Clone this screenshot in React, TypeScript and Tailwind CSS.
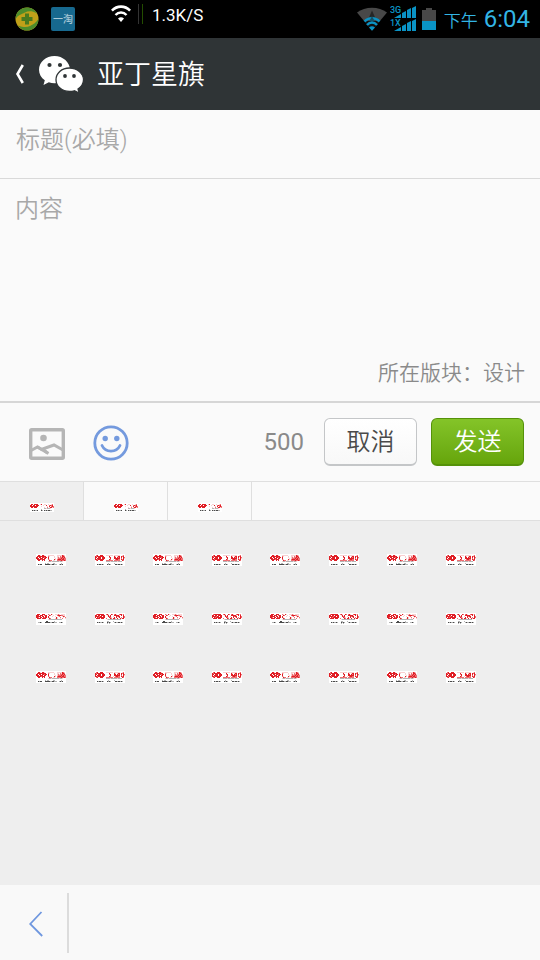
import React from "react";

const PALETTE: Record<string, string> = {
  R: "#e01f26",
  P: "#ee6e72",
  L: "#f8cfd0",
  K: "#4a4a4a",
  G: "#b4b4b4",
};

const STICKERS: string[][] = [
  [
    "..............................",
    "..RRL.RRL...LLLLLL...LLLLLRPL.",
    ".RRRRRRRRR..PL....L..LL.PLRRP.",
    "RR.RR.RRPRR.R.....L..LPLPPRPRL",
    "RRR.RRR.RR..R......L.LPPPRPRPP",
    ".RRRRPRRR...PL....RL.PRRRPRRPP",
    "..RR..R.R....RPP.LL..PPPPRPPRP",
    "............LGGLGGGGGGGLGGL...",
    "..............................",
    ".........G.GG....GG......G....",
    "..KGKK...KKKKKGGKKGGG..GKGK...",
    "..............................",
  ],
  [
    "..............................",
    ".PR..RRR...LLLLLLL.LLLLLL..LP.",
    "RPRRRRRRR.....R....RL.LRR.RPR.",
    "RR.RRR.RRR....PR...RR.RPR.R.RP",
    "R.RRRR.RRR.....R...RRRRRR.P.RL",
    "RRPRRRRRR.....RP..L.PRRPP.RPR.",
    ".PR..RRR...PPPPPPP.PPPPPP..RP.",
    "...........GGGGLGGGGGGLGGGG...",
    "..............................",
    ".............G.....G..........",
    "..KGKKGKG...KGKG....KKGKKGKG..",
    "..............................",
  ],
  [
    "..............................",
    ".RRR..RRR...PL.RL..LLLPL.LLLL.",
    "RRR.RRR.PRR..RP..L...PRRRPPLL.",
    "RRRRR.RR.RR.R...L..L..LP..LRP.",
    "RRP.RR.RPRR.RL......RL..P..L.P",
    ".RRRR.RRRR...RP....LRL..L.P..L",
    "............LGGGGGGGGGGGGG....",
    "..............................",
    "..........KK......G...........",
    "..GGKG...KKKKKGGKKGGG..GGKG...",
    "..............................",
    "..............................",
  ],
  [
    "..............................",
    ".PRRRRRRR..PRL..RP.PRL..PRRLP.",
    "RR.RR.RRRR..LR.R...RRRRRL.R.R.",
    "RRRRPRR.RR...RPR..L..RPRR...RP",
    "R.RPRRRRRR....RPL..R.R.LR.P.RP",
    ".RRRR.RRR..P...RP.RRL.R..RLRR.",
    "............LGGGGGGGGGGGGG....",
    "..............................",
    "............GG....G...........",
    "..KGKGGKG...KGKG...GKGGKKGKG..",
    "............G.G...............",
    "..............................",
  ],
];

const TAB_STICKER: string[] = [
  "........................",
  ".RR.RRRR..LR..LL..L..LP.",
  "RR.RR.RRR....L..R..PRPR.",
  "RRRRRRRR...L.....L.R.PRP",
  ".RR.RRR.......L..P.LRRLP",
  "..............GGLGGGL...",
  "...........G............",
  "..KGKGGK...KG.KGKGKKGG..",
  "........................",
];

const ROWS = [
  [0, 1, 0, 1, 0, 1, 0, 1],
  [2, 3, 2, 3, 2, 3, 2, 3],
  [0, 1, 0, 1, 0, 1, 0, 1],
];

function PixelArt({ rows, className }: { rows: string[]; className: string }) {
  const w = rows[0].length;
  return (
    <svg className={className} viewBox={`0 0 ${w} ${rows.length}`} shapeRendering="crispEdges" aria-hidden="true">
      <rect width={w} height={rows.length} fill="#fff" />
      {rows.flatMap((row, y) =>
        row.split("").map((c, x) =>
          PALETTE[c] ? <rect key={`${x}-${y}`} x={x} y={y} width="1" height="1" fill={PALETTE[c]} /> : null
        )
      )}
    </svg>
  );
}

function ShieldIcon() {
  return (
    <svg className="h-6 w-6" viewBox="0 0 24 24" aria-hidden="true">
      <circle cx="12" cy="12" r="11.5" fill="#c0a019" />
      <path d="M.6 12C.6 4 7 .5 12 .5c4 0 8 2 10 6C17 3.500 13 4 10 5.500 6 7.500 3 8 .6 12Z" fill="#4d8c2c" />
      <path d="M23.400 12c0 7-5.400 11.500-11.400 11.500-4 0-7-2-9-5 5 2 9 2 12 .5 3-1.500 6-3 8.400-7Z" fill="#4d8c2c" />
      <path d="M10 6.500h4V10h3.500v4H14v3.500h-4V14H6.500v-4H10Z" fill="#4a7a1e" />
    </svg>
  );
}

function WifiIcon() {
  return (
    <svg className="h-5 w-5" viewBox="0 0 20 20" fill="none" stroke="#fff" aria-hidden="true">
      <path d="M.9 6.700C6 1.300 14 1.300 19.100 6.700" strokeWidth="2.600" />
      <path d="M4.500 11c3-3.300 8-3.300 11 0" strokeWidth="2.400" />
      <path d="M7 14.500q3-2.400 6 0L10 18Z" fill="#fff" stroke="none" />
    </svg>
  );
}

function WifiStrengthIcon() {
  return (
    <svg className="h-6 w-[30px]" viewBox="0 0 30 24" aria-hidden="true">
      <path d="M0 5.500C8-.8 22-.8 30 5.500L15 23.500Z" fill="#484848" />
      <path d="M7 14l8 9.500L23 14Z" fill="#101010" />
      <path d="M15 3.500l3.500 8h-7Z" fill="#262626" />
      <g fill="none" stroke="#0a93c5" strokeWidth="2.400">
        <path d="M7.500 14.500c4-4.500 11-4.500 15 0" />
        <path d="M10 18c3-3.300 7-3.300 10 0" />
      </g>
      <path d="M12 20.500c2-1.800 4-1.800 6 0l-3 3.300Z" fill="#0a93c5" />
      <path d="M15 9l2.500 5h-5Z" fill="#174f63" />
    </svg>
  );
}

function SignalIcon() {
  return (
    <svg className="h-[27px] w-[27px]" viewBox="0 0 27 27" fill="#0a93c5" aria-hidden="true">
      <path d="M4 12l7-4v4ZM12 7l4-2v7h-4ZM17 4l4-2v10h-4ZM22 2l4-2V12h-4Z" />
      <path d="M4 25l7-4v4ZM12 20l4-2v7h-4ZM17 17l4-2v10h-4ZM22 15l4-2V25h-4Z" />
      <text x="0" y="7" fontSize="9" fontWeight="500" fontFamily="Roboto, sans-serif">3G</text>
      <text x="0" y="20" fontSize="9" fontWeight="500" fontFamily="Roboto, sans-serif">1X</text>
    </svg>
  );
}

function BatteryIcon() {
  return (
    <svg className="h-[22px] w-[14px]" viewBox="0 0 14 22" aria-hidden="true">
      <path d="M4 0h6v2h4v20H0V2h4Z" fill="#484848" />
      <path d="M0 13h14v9H0Z" fill="#0a93c5" />
    </svg>
  );
}

function ChatLogo() {
  return (
    <svg className="h-[37px] w-[45px]" viewBox="0 0 45 37" aria-hidden="true">
      <path d="M15.500 0C7 0 0 6 0 13.800c0 4.200 2.200 8 5.800 10.500L4.500 29l5.300-2.700c1.800.6 3.700.9 5.700.9C24 27.200 31 21.300 31 13.800S24 0 15.500 0Z" fill="#fff" />
      <path d="M30.500 12C22.500 12 17 17.300 17 23.700c0 6.700 6 11.800 13.500 11.800 1.700 0 3.300-.2 4.900-.7l4.800 2.200-1.200-4c3.200-2.200 5.500-5.500 5.500-9.300C44.500 17.300 38 12 30.500 12Z" fill="#fff" stroke="#2f3436" strokeWidth="1.300" />
      <g fill="#2f3436">
        <circle cx="10.500" cy="9" r="2.100" />
        <circle cx="21" cy="9" r="2.100" />
        <circle cx="26" cy="20" r="1.900" />
        <circle cx="35" cy="20" r="1.900" />
      </g>
    </svg>
  );
}

function PictureIcon() {
  return (
    <svg className="h-8 w-9" viewBox="0 0 36 32" fill="none" stroke="#b5b5b5" aria-hidden="true">
      <rect x="1.700" y="1.700" width="32.600" height="28.600" rx="1" strokeWidth="3.400" />
      <circle cx="14.500" cy="10" r="3.300" fill="#b5b5b5" stroke="none" />
      <path d="M2 22.500l6.500-3.500 5 3M18.500 25l-5-4L25 17l9 5" strokeWidth="3" />
      <path d="M8.500 19l11 6.500" strokeWidth="3" />
    </svg>
  );
}

function SmileIcon() {
  return (
    <svg className="h-9 w-9" viewBox="0 0 36 36" fill="none" stroke="#749ade" aria-hidden="true">
      <circle cx="18" cy="18" r="16.200" strokeWidth="2.800" />
      <circle cx="12.200" cy="13.500" r="2.700" fill="#749ade" stroke="none" />
      <circle cx="23.800" cy="13.500" r="2.700" fill="#749ade" stroke="none" />
      <path d="M9 20.500c3.500 7.500 14.500 7.500 18 0" strokeWidth="2.800" strokeLinecap="round" />
    </svg>
  );
}

function StatusBar() {
  return (
    <div className="flex h-[38px] items-center bg-black pr-[10px] pl-[15px] text-[#33b5e5]">
      <ShieldIcon />
      <span className="ml-3 flex h-6 w-6 items-center justify-center rounded-xs bg-[#17698f] text-[10px] font-medium text-[#a9c8d6]">
        一淘
      </span>
      <div className="ml-9 flex h-7 items-center self-start">
        <WifiIcon />
        <span className="ml-[7px] h-5 w-px bg-[#333]" />
        <span className="ml-[3px] h-5 w-px bg-[#234d00]" />
        <span className="ml-[9px] pt-[2px] text-[17px] leading-6 text-white">1.3K/S</span>
      </div>
      <div className="ml-auto flex items-center">
        <WifiStrengthIcon />
        <span className="ml-[3px]"><SignalIcon /></span>
        <span className="ml-[5px]"><BatteryIcon /></span>
        <span className="ml-2 pt-1 text-[17px] leading-6 font-[350]">下午</span>
        <span className="ml-[6px] text-2xl">6:04</span>
      </div>
    </div>
  );
}

export default function App() {
  return (
    <div className="flex min-h-screen flex-col bg-[#fafafa] font-['Roboto','Noto_Sans_CJK_SC',sans-serif]">
      <StatusBar />

      <header className="flex h-[72px] items-center bg-[#2f3436] pl-[15px] text-white">
        <button type="button" aria-label="返回" className="flex items-center">
          <svg className="h-5 w-[9px]" viewBox="0 0 9 20" fill="none" stroke="#fff" strokeWidth="2.600" aria-hidden="true">
            <path d="M7.800 1L2.500 10l5.300 9" />
          </svg>
        </button>
        <span className="ml-[15px]"><ChatLogo /></span>
        <h1 className="ml-[13px] pt-[2px] text-[27px] leading-9 font-[350]">亚丁星旗</h1>
      </header>

      <form className="flex flex-1 flex-col">
        <input
          type="text"
          aria-label="标题"
          placeholder="标题(必填)"
          className="h-[69px] w-full border-b border-[#d9d9d9] px-4 pb-2 text-2xl font-[350] text-[#555] outline-none placeholder:text-[#a8a8a8]"
        />
        <textarea
          aria-label="内容"
          placeholder="内容"
          className="block h-[175px] w-full resize-none px-[15px] pt-[14px] text-2xl leading-8 font-[350] text-[#555] outline-none placeholder:text-[#a8a8a8]"
        />
        <p className="h-[47px] pt-px pr-[15px] text-right text-[21px] leading-9 font-[350] text-[#8a8a8a]">所在版块：设计</p>

        <div className="flex h-[80px] items-center border-t-2 border-[#d6d6d6] pr-4 pl-[29px]">
          <button type="button" aria-label="插入图片" className="pt-1"><PictureIcon /></button>
          <button type="button" aria-label="插入表情" className="ml-[28px] pt-[2px]"><SmileIcon /></button>
          <span className="ml-auto text-2xl text-[#8a8a8a]">500</span>
          <button
            type="button"
            className="ml-5 h-12 w-[93px] rounded-md border border-b-2 border-[#c4c6c8] bg-linear-to-b from-white to-[#f8f8f8] text-2xl font-[350] text-[#4a4a4a]"
          >
            取消
          </button>
          <button
            type="submit"
            className="ml-[14px] h-12 w-[93px] rounded-md border border-b-2 border-[#559209] bg-linear-to-b from-[#84c428] to-[#66a50a] text-2xl font-[350] text-white"
          >
            发送
          </button>
        </div>

        <div className="flex h-10 border-y border-[#dfdfdf]" role="tablist" aria-label="表情分类">
          {[0, 1, 2].map((i) => (
            <button
              key={i}
              type="button"
              role="tab"
              aria-selected={i === 0}
              aria-label={`表情组 ${i + 1}`}
              className="flex w-[84px] items-end justify-center border-r border-[#dfdfdf] pb-2 aria-selected:bg-[#efefef]"
            >
              <PixelArt rows={TAB_STICKER} className="h-[9px] w-6" />
            </button>
          ))}
        </div>

        <div className="flex-1 bg-[#eee] pt-[33px] pr-[50px] pl-[22px]">
          <div className="grid h-[129px] grid-cols-8 content-between justify-items-center">
            {ROWS.flat().map((kind, i) => (
              <button key={i} type="button" aria-label={`表情 ${i + 1}`}>
                <PixelArt rows={STICKERS[kind]} className="block h-3 w-[30px]" />
              </button>
            ))}
          </div>
        </div>
      </form>

      <footer className="flex h-[75px] items-center bg-[#f9f9f9]">
        <button type="button" aria-label="上一页" className="flex h-[60px] w-[69px] items-center border-r-2 border-[#dcdcdc] pt-[3px] pl-[29px]">
          <svg className="h-[26px] w-[14px]" viewBox="0 0 14 26" fill="none" stroke="#6f97df" strokeWidth="1.800" aria-hidden="true">
            <path d="M12.500 1L1.200 13l12 12" />
          </svg>
        </button>
      </footer>
    </div>
  );
}
